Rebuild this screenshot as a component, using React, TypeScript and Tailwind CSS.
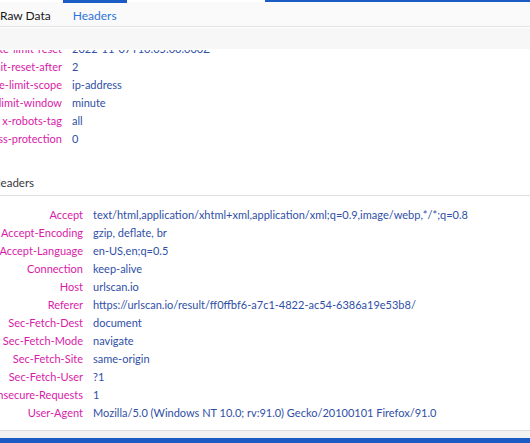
import React from 'react';

// Firefox JSON viewer — Headers tab, scrolled partway down

const responseTail: [string, string][] = [
  ['x-rate-limit-reset', '2022-11-07T10:05:00.000Z'],
  ['x-rate-limit-reset-after', '2'],
  ['x-rate-limit-scope', 'ip-address'],
  ['x-rate-limit-window', 'minute'],
  ['x-robots-tag', 'all'],
  ['x-xss-protection', '0'],
];

const requestHeaders: [string, string][] = [
  ['Accept', 'text/html,application/xhtml+xml,application/xml;q=0.9,image/webp,*/*;q=0.8'],
  ['Accept-Encoding', 'gzip, deflate, br'],
  ['Accept-Language', 'en-US,en;q=0.5'],
  ['Connection', 'keep-alive'],
  ['Host', 'urlscan.io'],
  ['Referer', 'https://urlscan.io/result/ff0ffbf6-a7c1-4822-ac54-6386a19e53b8/'],
  ['Sec-Fetch-Dest', 'document'],
  ['Sec-Fetch-Mode', 'navigate'],
  ['Sec-Fetch-Site', 'same-origin'],
  ['Sec-Fetch-User', '?1'],
  ['Upgrade-Insecure-Requests', '1'],
  ['User-Agent', 'Mozilla/5.0 (Windows NT 10.0; rv:91.0) Gecko/20100101 Firefox/91.0'],
];

function HeaderRows({ rows }: { rows: [string, string][] }) {
  return (
    <div className="flex flex-col">
      {rows.map(([k, v]) => (
        <div key={k} className="flex h-[18px] items-center whitespace-nowrap">
          <div className="w-[170px] shrink-0 text-right text-[#d81ba8]">{k}</div>
          <div className="pl-[10px] text-[#2f4fa6]">{v}</div>
        </div>
      ))}
    </div>
  );
}

export default function App() {
  return (
    <div className="h-[443px] w-[530px] overflow-hidden bg-white font-['Lato',sans-serif] text-[11px] flex flex-col">
      {/* tab strip */}
      <div className="flex h-[2px]">
        <div className="w-[265px]" />
        <div className="flex-1 bg-[#1b5cc4]" />
      </div>
      <div className="flex h-[25px] items-end border-b border-[#e1e1e2] bg-[#fafafa] text-[12px]">
        <div className="flex h-full items-center pt-[3px] pr-[12px] text-[#18181a]">Raw Data</div>
        <div className="relative flex h-full items-center px-[10px] pt-[3px] text-[#2d75d8]">
          <div className="absolute left-0 right-0 -top-[2px] h-[3px] bg-[#1b5cc4]" />
          Headers
        </div>
      </div>
      {/* toolbar */}
      <div className="h-[23px] border-t border-white border-b border-[#e2e2e2] bg-[#f7f7f7]" />

      {/* scrolled content */}
      <div className="flex-1 overflow-hidden">
        <div className="-mt-[10px]">
          <div className="ml-[-108px]">
            <HeaderRows rows={responseTail} />
          </div>

          <div className="mt-[26px] border-b border-[#e0e0e2] pb-[4px]">
            <div className="ml-[-8px] text-[11.5px] text-[#38383d]">Headers</div>
          </div>

          <div className="mt-[10px] ml-[-87px]">
            <HeaderRows rows={requestHeaders} />
          </div>
        </div>
      </div>

      {/* bottom edge */}
      <div className="h-[8px] border-t border-[#dcdcdc] bg-[#f2f2f2]" />
      <div className="h-[5px] bg-[#1b5cc4]" />
    </div>
  );
}
